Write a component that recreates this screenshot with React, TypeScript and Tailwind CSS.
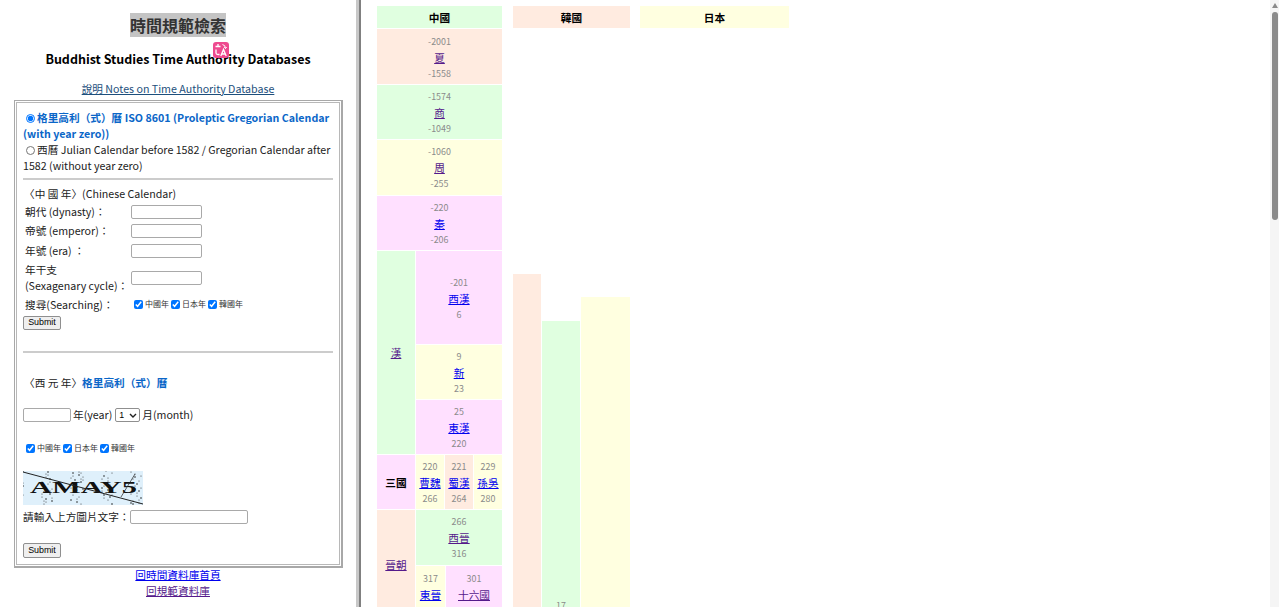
const PEACH = "bg-[#ffebe0]";
const GREEN = "bg-[#e0ffe0]";
const YELLOW = "bg-[#ffffe0]";
const PINK = "bg-[#ffe0ff]";

const inputCls = "border border-[#a9a9a9] rounded-[2px] bg-white h-[14px]";
const buttonCls =
  "border border-[#8f8f8f] rounded-[2px] bg-[#efefef] h-[14.5px] w-[38px] font-['Liberation_Sans',sans-serif] text-[8.9px] leading-none text-black";

// pseudo random specks for the captcha
const specks = Array.from({ length: 90 }, (_, i) => ({
  x: (i * 47 + (i % 7) * 13) % 120,
  y: (i * 29 + (i % 5) * 11) % 34,
  r: i % 3 === 0 ? 0.8 : 0.5,
}));

function Check({ label }: { label: string }) {
  return (
    <label className="flex items-center w-[37px] shrink-0">
      <input type="checkbox" defaultChecked className="w-[9px] h-[9px] m-0 accent-[#0075ff]" />
      <span className="text-[8px] leading-[10px] ml-[2px] whitespace-nowrap text-[#333]">{label}</span>
    </label>
  );
}

function Checks() {
  return (
    <div className="flex items-center">
      <Check label="中國年" />
      <Check label="日本年" />
      <Check label="韓國年" />
    </div>
  );
}

function Row({ label, h = "h-[19.5px]" }: { label: React.ReactNode; h?: string }) {
  return (
    <div className={`flex items-center ${h}`}>
      <div className="w-[106px] pl-[2px] shrink-0">{label}</div>
      <input className={`${inputCls} w-[71px] ml-[2px]`} />
    </div>
  );
}

function Era({
  from,
  name,
  to,
  visited,
  className,
}: {
  from: string;
  name: string;
  to: string;
  visited?: boolean;
  className: string;
}) {
  return (
    <div className={`flex flex-col items-center justify-center text-center ${className}`}>
      <span className="text-[#8a8a8a] text-[8.9px] leading-[16px]">{from}</span>
      <a className={`text-[10.67px] leading-[16px] underline ${visited ? "text-[#551a8b]" : "text-[#0000ee]"}`}>{name}</a>
      <span className="text-[#8a8a8a] text-[8.9px] leading-[16px]">{to}</span>
    </div>
  );
}

function Header({ label, className }: { label: string; className: string }) {
  return (
    <div className={`h-[22.4px] pt-[2px] flex items-center justify-center text-[10.67px] font-bold text-black ${className}`}>
      {label}
    </div>
  );
}

export default function App() {
  return (
    <div className="h-[607px] w-[1279px] overflow-hidden flex bg-white text-[#222] font-['Noto_Sans_CJK_TC',sans-serif] text-[10.67px] leading-[16px]">
      {/* left frame */}
      <div className="w-[356px] shrink-0 relative flex flex-col items-center pt-[13px]">
        <h1 className="h-[24px] w-[96px] bg-[#c4c4c4] text-[16px] leading-[24px] font-bold text-[#333] text-center whitespace-nowrap">
          時間規範檢索
        </h1>
        <h2 className="mt-[13px] text-[12.48px] leading-[18px] font-bold text-black">Buddhist Studies Time Authority Databases</h2>
        <a className="mt-[13px] h-[16px] text-[#1d4f7c] underline">說明 Notes on Time Authority Database</a>

        {/* translate extension badge */}
        <div className="absolute left-[213px] top-[42px] w-[16px] h-[16px] rounded-[3px] bg-[#ee4a8f] flex items-center justify-center">
          <svg width="14" height="14" viewBox="0 0 14 14" fill="none" stroke="white" strokeWidth="1.3">
            <path d="M1.5 3.5 H6.5 M4 1 V3.5" />
            <path d="M2 6.5 V10 Q2 11.5 4 11.5 H5.5" />
            <path d="M8.5 1.5 Q11.5 2 11.5 5.5 M10.2 4.2 L11.5 5.5 L12.8 4.2" strokeWidth="1" />
            <path d="M6.8 13 L9.5 6.5 L12.2 13 M7.8 11 H11.2" />
          </svg>
        </div>

        <div className="mt-[3px] ml-[1px] w-[329px] h-[468px] border border-[#a8a8a8] border-b-2 border-r-2 p-[1px]">
          <div className="h-full border border-[#b8b8b8] pl-[6px] pr-[6px] pt-[7px]">
            <div className="text-[#0a66c8] font-bold">
              <input type="radio" name="cal" defaultChecked className="w-[9px] h-[9px] ml-[3px] mr-[2px] align-[-1px] accent-[#0075ff]" />
              <span>格里高利（式）曆 ISO 8601 (Proleptic Gregorian Calendar (with year zero))</span>
            </div>
            <div>
              <input type="radio" name="cal" className="w-[9px] h-[9px] ml-[3px] mr-[2px] align-[-1px]" />
              <span>西曆 Julian Calendar before 1582 / Gregorian Calendar after 1582 (without year zero)</span>
            </div>
            <hr className="mt-[4px] border-0 h-[2px] bg-[#ccc]" />

            <div className="mt-[6px] pl-[1px]">〈中 國 年〉(Chinese Calendar)</div>
            <div className="mt-0">
              <Row label="朝代 (dynasty)：" />
              <Row label="帝號 (emperor)：" />
              <Row label="年號 (era) ：" />
              <Row h="h-[35px]" label={<>年干支<br />(Sexagenary cycle)：</>} />
              <div className="flex items-center h-[19px]">
                <div className="w-[106px] pl-[2px] shrink-0">搜尋(Searching)：</div>
                <div className="ml-[5px] mt-[-2px]">
                  <Checks />
                </div>
              </div>
            </div>
            <button className={`${buttonCls} block mt-[1px]`}>Submit</button>
            <hr className="mt-[21px] border-0 h-[2px] bg-[#ccc]" />

            <div className="mt-[22px] pl-[1px]">
              〈西 元 年〉<span className="text-[#0a66c8] font-bold">格里高利（式）曆</span>
            </div>
            <div className="mt-[16px] flex items-center gap-[2px]">
              <input className={`${inputCls} w-[48px]`} />
              <span>年(year)</span>
              <span className="relative w-[25px] h-[14px] ml-[1px]">
                <select
                  defaultValue="1"
                  className="appearance-none block border border-[#8f8f8f] rounded-[2px] w-full h-full text-[8.9px] leading-none font-['Liberation_Sans',sans-serif] text-black pl-[3px] bg-white"
                >
                  <option>1</option>
                </select>
                <svg width="8" height="5" viewBox="0 0 8 5" className="absolute right-[3px] top-[5px]">
                  <path d="M1 1 L4 4 L7 1" fill="none" stroke="#222" strokeWidth="1.4" />
                </svg>
              </span>
              <span>月(month)</span>
            </div>
            <div className="mt-[20px] pl-[3px]">
              <Checks />
            </div>

            <svg width="120" height="34" viewBox="0 0 120 34" className="block mt-[18px]">
              <rect width="120" height="34" fill="#dff0fb" />
              {specks.map((s, i) => (
                <circle key={i} cx={s.x} cy={s.y} r={s.r} fill="#222" />
              ))}
              <text
                x="7"
                y="22"
                fontFamily="Liberation Serif"
                fontWeight="bold"
                fontSize="16"
                textLength="107"
                lengthAdjust="spacingAndGlyphs"
                fill="#111"
              >
                AMAY5
              </text>
              <path d="M0 1 L120 33" stroke="#222" strokeWidth="1" />
              <path d="M98 26 L112 3" stroke="#222" strokeWidth="0.7" />
            </svg>

            <div className="mt-[4px] flex items-center h-[16px]">
              <span>請輸入上方圖片文字：</span>
              <input className={`${inputCls} w-[118px]`} />
            </div>
            <button className={`${buttonCls} block mt-[18px]`}>Submit</button>
          </div>
        </div>
        <a className="mt-[-1px] text-[#0000ee] underline">回時間資料庫首頁</a>
        <a className="text-[#551a8b] underline">回規範資料庫</a>
      </div>

      {/* frame divider */}
      <div className="w-[5px] shrink-0 bg-[#c8c8c8] border-r-2 border-[#808080]" />

      {/* right frame */}
      <div className="flex-1 overflow-hidden pl-[16px] pt-[6px] flex items-start">
        <div className="w-[125px] shrink-0 flex flex-col gap-[1px]">
          <Header label="中國" className={GREEN} />
          <Era from="-2001" name="夏" to="-1558" visited className={`h-[54.4px] pt-[2px] ${PEACH}`} />
          <Era from="-1574" name="商" to="-1049" visited className={`h-[54.4px] pt-[2px] ${GREEN}`} />
          <Era from="-1060" name="周" to="-255" visited className={`h-[54.4px] pt-[2px] ${YELLOW}`} />
          <Era from="-220" name="秦" to="-206" className={`h-[54.4px] pt-[2px] ${PINK}`} />
          <div className="flex gap-[1px]">
            <div className={`w-[38px] pt-[1px] flex items-center justify-center ${GREEN}`}>
              <a className="underline text-[#551a8b]">漢</a>
            </div>
            <div className="flex-1 flex flex-col gap-[1px]">
              <Era from="-201" name="西漢" to="6" className={`h-[93px] pt-[3px] ${PINK}`} />
              <Era from="9" name="新" to="23" className={`h-[54.4px] pt-[2px] ${YELLOW}`} />
              <Era from="25" name="東漢" to="220" className={`h-[53.4px] pt-[2px] ${PINK}`} />
            </div>
          </div>
          <div className="flex gap-[1px]">
            <div className={`w-[38px] pt-[2px] flex items-center justify-center font-bold text-black ${PINK}`}>三國</div>
            <div className="flex-1 flex gap-[1px]">
              <Era from="220" name="曹魏" to="266" className={`flex-1 h-[54.4px] pt-[3px] ${YELLOW}`} />
              <Era from="221" name="蜀漢" to="264" className={`flex-1 h-[54.4px] pt-[3px] ${PEACH}`} />
              <Era from="229" name="孫吳" to="280" className={`flex-1 h-[54.4px] pt-[3px] ${YELLOW}`} />
            </div>
          </div>
          <div className="flex gap-[1px]">
            <div className={`w-[38px] flex items-center justify-center ${PEACH}`}>
              <a className="underline text-[#551a8b]">晉朝</a>
            </div>
            <div className="flex-1 flex flex-col gap-[1px]">
              <Era from="266" name="西晉" to="316" visited className={`h-[54.4px] pt-[2px] ${GREEN}`} />
              <div className="flex gap-[1px]">
                <Era from="317" name="東晉" to="420" className={`w-[29px] h-[54.4px] pt-[4px] shrink-0 ${YELLOW}`} />
                <Era from="301" name="十六國" to="439" visited className={`flex-1 h-[54.4px] pt-[4px] ${PINK}`} />
              </div>
            </div>
          </div>
        </div>

        <div className="w-[117px] ml-[11px] shrink-0 flex flex-col">
          <Header label="韓國" className={PEACH} />
          <div className="flex gap-[1px]">
            <div className={`w-[28px] h-[400px] mt-[246px] ${PEACH}`} />
            <div className={`w-[38px] h-[400px] mt-[293px] text-center ${GREEN}`}>
              <span className="block pt-[277px] text-[#8a8a8a] text-[8.9px] leading-[16px]">17</span>
            </div>
            <div className={`flex-1 h-[400px] mt-[269px] ${YELLOW}`} />
          </div>
        </div>

        <div className="w-[149px] ml-[10px] shrink-0">
          <Header label="日本" className={YELLOW} />
        </div>
      </div>

      {/* scrollbar */}
      <div className="w-[9px] shrink-0 bg-[#f5f5f5] flex flex-col items-center pt-[3px]">
        <div className="w-0 h-0 border-x-[3px] border-x-transparent border-b-[5px] border-b-[#8a8a8a]" />
        <div className="mt-[4px] w-[6px] h-[208px] rounded-full bg-[#8a8a8a]" />
      </div>
    </div>
  );
}
